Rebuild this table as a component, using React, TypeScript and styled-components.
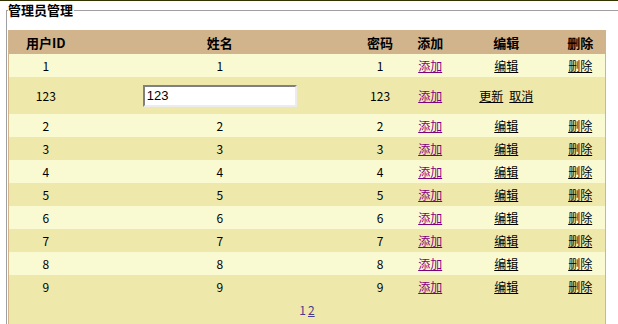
import React from 'react';
import styled, { createGlobalStyle } from 'styled-components';

const GlobalStyle = createGlobalStyle`
  html, body {
    margin: 0;
    padding: 0;
    overflow: hidden;
    background: #ffffff;
  }
  body {
    font-family: "Noto Sans CJK SC", "Noto Sans", sans-serif;
    font-size: 12px;
    color: #000;
  }
`;

const TopRule = styled.div`
  height: 1px;
  background: #333300;
`;

const Panel = styled.fieldset`
  margin: 1px -30px 0 6px;
  padding: 12px 0 0 1px;
  border: none;
  border-top: 1px solid #a0a0a0;
  border-left: 1px solid #a0a0a0;
  box-shadow: inset 1px 1px 0 #ffffff;
  min-width: 0;
`;

const Legend = styled.legend`
  padding: 0 1px 0 0;
  margin-left: 0;
  font-size: 13px;
  font-weight: bold;
  line-height: 16px;
`;

const Grid = styled.table`
  width: 598px;
  border-collapse: collapse;
  border: 1px solid #d2b48c;
  background: #fafad2;
`;

const HeadCell = styled.th<{ $w: number }>`
  width: ${p => p.$w}px;
  height: 23px;
  padding: 0 2px;
  background: #d2b48c;
  font-size: 13px;
  font-weight: bold;
  text-align: center;
  box-sizing: border-box;
`;

const Row = styled.tr<{ $alt?: boolean; $tall?: boolean }>`
  background: ${p => (p.$alt ? '#eee8aa' : '#fafad2')};
  height: ${p => (p.$tall ? 37 : 23)}px;
`;

const Cell = styled.td`
  padding: 1px 2px 0;
  text-align: center;
  line-height: 16px;
`;

const Link = styled.a<{ $visited?: boolean }>`
  color: ${p => (p.$visited ? '#800080' : '#000000')};
  text-decoration: underline;
  cursor: pointer;
`;

const Gap = styled.span`
  display: inline-block;
  width: 6px;
`;

const EditBox = styled.input`
  width: 154px;
  height: 22px;
  box-sizing: border-box;
  padding: 1px 2px;
  border-style: solid;
  border-width: 2px;
  border-color: #808080 #ececec #ececec #808080;
  font-family: "Liberation Sans", Arial, sans-serif;
  font-size: 13px;
  color: #000;
  background: #fff;
  outline: none;
`;

const PagerRow = styled.tr`
  background: #eee8aa;
  height: 27px;
`;

const PagerCell = styled.td`
  text-align: center;
  vertical-align: top;
  padding-top: 4px;
  color: #483d8b;
  line-height: 16px;
`;

const PageLink = styled.a`
  color: #483d8b;
  text-decoration: underline;
  margin-left: 2px;
`;

const columns = [
  { title: '用户ID', w: 74 },
  { title: '姓名', w: 274 },
  { title: '密码', w: 46 },
  { title: '添加', w: 54 },
  { title: '编辑', w: 98 },
  { title: '删除', w: 50 },
];

const users = ['1', '123', '2', '3', '4', '5', '6', '7', '8', '9'];

const App: React.FC = () => {
  return (
    <>
      <GlobalStyle />
      <TopRule />
      <Panel>
        <Legend>管理员管理</Legend>
        <Grid>
          <thead>
            <tr>
              {columns.map(c => (
                <HeadCell key={c.title} $w={c.w}>{c.title}</HeadCell>
              ))}
            </tr>
          </thead>
          <tbody>
            {users.map((u, i) => {
              const editing = u === '123';
              return (
                <Row key={u} $alt={i % 2 === 1} $tall={editing}>
                  <Cell>{u}</Cell>
                  <Cell>{editing ? <EditBox defaultValue="123" /> : u}</Cell>
                  <Cell>{u}</Cell>
                  <Cell><Link $visited>添加</Link></Cell>
                  {editing ? (
                    <>
                      <Cell><Link>更新</Link><Gap /><Link>取消</Link></Cell>
                      <Cell />
                    </>
                  ) : (
                    <>
                      <Cell><Link>编辑</Link></Cell>
                      <Cell><Link>删除</Link></Cell>
                    </>
                  )}
                </Row>
              );
            })}
            <PagerRow>
              <PagerCell colSpan={6}>
                <span>1</span><PageLink>2</PageLink>
              </PagerCell>
            </PagerRow>
          </tbody>
        </Grid>
      </Panel>
    </>
  );
};

export default App;
